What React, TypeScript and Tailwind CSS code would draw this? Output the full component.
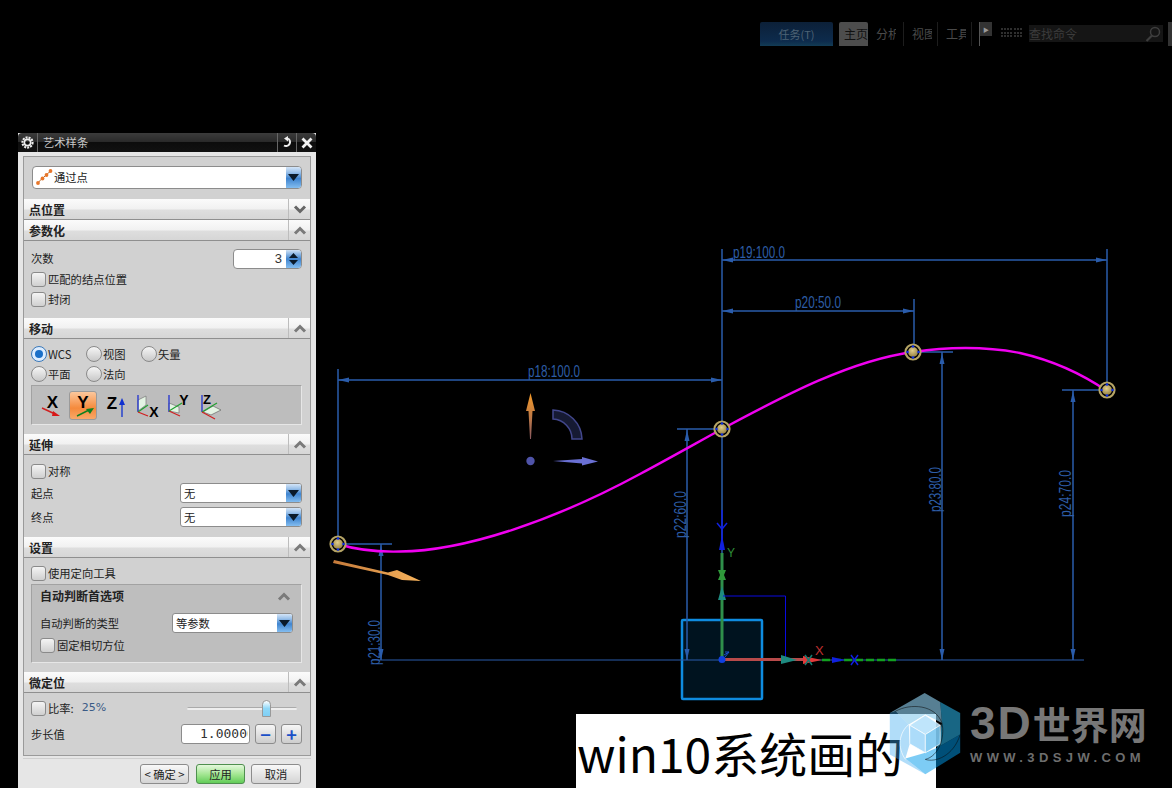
import React from "react";

const CURVE =
  "M338,544 C360,551 380,552 400,551.5 C465,551 555,520 640,474 C670,458 700,441 722,429 C780,398 850,360 914,352 C945,347 985,346 1020,353 C1055,361 1085,376 1107,391";

const DIM = "#2a5cab";

function ArrowH({ x, y, dir }: { x: number; y: number; dir: 1 | -1 }) {
  return <polygon points={`${x},${y} ${x - dir * 11},${y - 2.5} ${x - dir * 11},${y + 2.5}`} fill={DIM} />;
}
function ArrowV({ x, y, dir }: { x: number; y: number; dir: 1 | -1 }) {
  return <polygon points={`${x},${y} ${x - 2.5},${y - dir * 11} ${x + 2.5},${y - dir * 11}`} fill={DIM} />;
}
function DimText({ x, y, len, t, rot }: { x: number; y: number; len: number; t: string; rot?: boolean }) {
  return (
    <text x={x} y={y} fontFamily="'Liberation Sans',sans-serif" fontSize={16} fill="#2d5da6" textLength={len} lengthAdjust="spacingAndGlyphs" transform={rot ? `rotate(-90 ${x} ${y})` : undefined}>
      {t}
    </text>
  );
}
function Node({ x, y }: { x: number; y: number }) {
  return (
    <g>
      <circle cx={x} cy={y} r={7.5} fill="#000" stroke="#b5a465" strokeWidth={2.2} />
      <circle cx={x} cy={y} r={5} fill="url(#ball)" />
      <g fill="#1030e0">
        <circle cx={x} cy={y - 5.5} r={1.3} /><circle cx={x} cy={y + 5.5} r={1.3} /><circle cx={x - 5.5} cy={y} r={1.3} /><circle cx={x + 5.5} cy={y} r={1.3} />
      </g>
    </g>
  );
}

function Scene() {
  return (
    <svg className="absolute left-0 top-0" width={1172} height={788} viewBox="0 0 1172 788">
      <defs>
        <radialGradient id="ball" cx="45%" cy="35%" r="75%"><stop offset="0" stopColor="#e0cd8c" /><stop offset="1" stopColor="#8a7638" /></radialGradient>
        <linearGradient id="org" x1="0" x2="1" y1="0" y2="0"><stop offset="0" stopColor="#c57a3a" /><stop offset="1" stopColor="#f7b35c" /></linearGradient>
        <linearGradient id="orgv" x1="0" x2="0" y1="0" y2="1"><stop offset="0" stopColor="#f59a28" /><stop offset="1" stopColor="#8a5a60" /></linearGradient>
      </defs>
      <rect x={682} y={620} width={80} height={79} rx={1} fill="#00131f" stroke="#0f8ce0" strokeWidth={2.5} />
      <g stroke={DIM} strokeWidth={1.5} fill="none">
        <path d="M338,369V544M338,380H722" />
        <path d="M722,249V660M722,260H1107M1107,249V390M722,311H914M914,299V352" />
        <path d="M372,660H1084" strokeWidth={1} />
        <path d="M338,544H392M381,544V660" />
        <path d="M677,429H722M687,429V660" />
        <path d="M914,352H953M942,352V660" />
        <path d="M1062,390H1107M1073,390V660" />
      </g>
      <ArrowH x={338} y={380} dir={-1} /><ArrowH x={722} y={380} dir={1} />
      <ArrowH x={722} y={260} dir={-1} /><ArrowH x={1107} y={260} dir={1} />
      <ArrowH x={722} y={311} dir={-1} /><ArrowH x={914} y={311} dir={1} />
      <ArrowV x={381} y={545} dir={-1} /><ArrowV x={381} y={660} dir={1} />
      <ArrowV x={687} y={430} dir={-1} /><ArrowV x={687} y={660} dir={1} />
      <ArrowV x={942} y={353} dir={-1} /><ArrowV x={942} y={660} dir={1} />
      <ArrowV x={1073} y={391} dir={-1} /><ArrowV x={1073} y={660} dir={1} />
      <DimText x={528} y={377} len={52} t="p18:100.0" />
      <DimText x={733} y={258} len={52} t="p19:100.0" />
      <DimText x={795} y={308} len={46} t="p20:50.0" />
      <DimText x={380} y={665} len={45} t="p21:30.0" rot />
      <DimText x={686} y={538} len={47} t="p22:60.0" rot />
      <DimText x={941} y={512} len={45} t="p23:80.0" rot />
      <DimText x={1071} y={517} len={47} t="p24:70.0" rot />

      <path d={CURVE} fill="none" stroke="#f000f0" strokeWidth={2.4} />
      <Node x={338} y={544} /><Node x={722} y={429} /><Node x={913} y={352} /><Node x={1107} y={390} />

      {/* gizmo */}
      <polygon points="530.5,393 526,411 528.5,411 530,439 531,439 532.5,411 535,411" fill="url(#orgv)" />
      <path d="M553,410 A30,30 0 0 1 582,439 L572,439 A20,20 0 0 0 553,419 Z" fill="#161a33" stroke="#42478c" strokeWidth={1.5} />
      <circle cx={530.5} cy={461} r={4.2} fill="#4f53a8" />
      <polygon points="553,461 582,459 582,457 598,461.5 582,465.5 582,463.5" fill="#6a70d4" />
      <polygon points="334,560 388,572.5 397,570 421,581 402,580 388,575 333,563" fill="url(#org)" />

      {/* WCS */}
      <path d="M722,510V545" stroke="#1020e0" strokeWidth={1.5} />
      <path d="M717,523L722,529L727,523" stroke="#1020e0" strokeWidth={1.5} fill="none" />
      <polygon points="722,535 719,550 725,550" fill="#1020e0" />
      <path d="M722,553V660" stroke="#2f8f4a" strokeWidth={3} />
      <polygon points="718,570 726,570 724,575 726,580 718,580 720,575" fill="#2f9a3a" />
      <polygon points="722,586 718,600 726,600" fill="#1e8a80" />
      <path d="M723,596H785.5V660" stroke="#0a0ae0" strokeWidth={1} fill="none" />
      <text x={727} y={557} fontFamily="'Liberation Sans',sans-serif" fontSize={12} fill="#2f8f3a">Y</text>
      <path d="M722,659.5H805" stroke="#b84a4a" strokeWidth={3} />
      <polygon points="781,655 797,660 781,664" fill="#1e8a80" />
      <polygon points="803,656 822,660 803,664" fill="#e23a3a" />
      <path d="M805,655L812,665M812,655L805,665" stroke="#147a70" strokeWidth={1.5} />
      <text x={815} y={655} fontFamily="'Liberation Sans',sans-serif" fontSize={13} fill="#c03030">X</text>
      <path d="M822,660H898" stroke="#12a020" strokeWidth={2.5} strokeDasharray="8 3" />
      <polygon points="832,657 845,660 832,663" fill="#1020e0" />
      <path d="M851,655L858,665M858,655L851,665" stroke="#1020e0" strokeWidth={1.5} />
      <circle cx={722} cy={659.5} r={3.5} fill="#1040e0" />
      <path d="M724,655L729,652M725,652H729L725,657" stroke="#1a50d0" strokeWidth={1} fill="none" />
    </svg>
  );
}

function Logo() {
  return (
    <svg width={74} height={83} viewBox="28 25 212 250" className="shrink-0">
      <polygon points="28,85 133,25 180,52 185,115 135,90 85,120 45,80" fill="rgba(140,205,238,.62)" />
      <polygon points="180,52 240,85 240,150 170,190 185,115" fill="rgba(40,170,220,.6)" />
      <polygon points="240,150 240,205 135,270 75,222 135,205 170,190" fill="rgba(0,155,235,.51)" />
      <polygon points="28,85 45,80 85,120 88,178 75,222 135,270 28,210" fill="rgba(60,170,240,.4)" />
      <polygon points="88,122 135,92 180,122 135,150" fill="#b8e2fb" fillOpacity={0.9} stroke="#fff" strokeWidth={2} />
      <polygon points="88,122 135,150 135,205 88,178" fill="#a3d8f9" fillOpacity={0.9} stroke="#fff" strokeWidth={2} />
      <polygon points="135,150 180,122 180,178 135,205" fill="#7cc8f1" fillOpacity={0.9} stroke="#fff" strokeWidth={2} />
      <path d="M45,80 C90,55 165,60 185,115 C195,160 175,215 135,225" fill="none" stroke="#0a0a0a" strokeWidth={2} opacity={0.8} />
      <path d="M240,150 C220,215 165,235 135,225" fill="none" stroke="#0a0a0a" strokeWidth={2} opacity={0.8} />
      <path d="M85,120 C55,145 50,190 75,225" fill="none" stroke="#fff" strokeWidth={2} />
    </svg>
  );
}

function Chevron({ up = true, dark = false }: { up?: boolean; dark?: boolean }) {
  return (
    <svg width={14} height={9} viewBox="0 0 14 9">
      <path d={up ? "M2,7.5L7,2.5L12,7.5" : "M2,1.5L7,6.5L12,1.5"} fill="none" stroke={dark ? "#666" : "#7a7a7a"} strokeWidth={3} />
    </svg>
  );
}

function Header({ title, up = true }: { title: string; up?: boolean }) {
  return (
    <div className="flex h-[21px] items-stretch border-b border-[#8f8f8f] bg-[linear-gradient(#fbfbfb_0%,#f1f1f1_50%,#dedede_55%,#d6d6d6_100%)]">
      <div className="flex-1 pl-[5px] text-[12px] font-bold leading-[21px] text-[#222]">{title}</div>
      <div className="flex w-[22px] items-center justify-center border-l border-[#bdbdbd]">
        <Chevron up={up} dark={!up} />
      </div>
    </div>
  );
}

function Check({ label, className = "" }: { label: string; className?: string }) {
  return (
    <div className={`flex items-center text-[11.3px] text-[#222] ${className}`}>
      <div className="mr-[2px] h-[15px] w-[15px] rounded-[3px] border border-[#8a8a8a] bg-[linear-gradient(#f4f4f4,#cfcfcf)]" />
      <span>{label}</span>
    </div>
  );
}

function Radio({ label, on = false }: { label: string; on?: boolean }) {
  return (
    <div className="flex w-[55px] items-center text-[11.3px] text-[#222]">
      <div className={`mr-[1px] flex h-[16px] w-[16px] items-center justify-center rounded-full border ${on ? "border-[#3a78b8] bg-[#dcecff]" : "border-[#8a8a8a] bg-[linear-gradient(#f6f6f6,#c8c8c8)]"}`}>
        {on && <div className="h-[8px] w-[8px] rounded-full bg-[#1a6fc8]" />}
      </div>
      <span>{label}</span>
    </div>
  );
}

function Combo({ value, w, className = "" }: { value: string; w: string; className?: string }) {
  return (
    <div className={`flex h-[20px] items-stretch overflow-hidden rounded-[3px] border border-[#8c8c8c] bg-white ${w} ${className}`}>
      <div className="flex-1 pl-[3px] text-[11.3px] leading-[19px] text-[#222]">{value}</div>
      <DropBtn />
    </div>
  );
}
function DropBtn() {
  return (
    <div className="flex w-[15px] items-center justify-center bg-[linear-gradient(#d3e4f7_0%,#9cc2ea_25%,#3f84cf_55%,#83bdf0_100%)]">
      <svg width={11} height={7} viewBox="0 0 11 7"><polygon points="0,0 11,0 5.5,7" fill="#0a1a2a" /></svg>
    </div>
  );
}

function IconBtn({ children, on = false }: { children: React.ReactNode; on?: boolean }) {
  return (
    <div className={`h-[29px] w-[28px] shrink-0 rounded-[3px] ${on ? "border border-[#9a9a9a] bg-[linear-gradient(#fcc79c,#f58a3c_60%,#f9a868)]" : ""}`}>
      <svg width={on ? 26 : 28} height={on ? 27 : 29} viewBox={on ? "1 1 26 27" : "0 0 28 29"} fontFamily="'Liberation Sans',sans-serif" fontWeight={700} fill="#000">
        {children}
      </svg>
    </div>
  );
}

function Btn({ label, w, cls }: { label: string; w: string; cls: string }) {
  return <div className={`flex h-[20px] items-center justify-center rounded-[3px] border text-[11.3px] text-[#222] ${w} ${cls}`}>{label}</div>;
}

function SmallBtn({ label, color }: { label: string; color: string }) {
  return <div className={`flex h-[20px] w-[21px] items-center justify-center rounded-[3px] border border-[#8c8c8c] bg-[linear-gradient(#f6f6f6,#cdcdcd)] text-[18px] font-bold leading-none ${color}`}>{label}</div>;
}

function Dialog() {
  return (
    <div className="absolute left-[18px] top-[133px] h-[655px] w-[298px] bg-[#e6e6e6] font-['Noto_Sans_CJK_SC','Liberation_Sans',sans-serif]">
      {/* title bar */}
      <div className="flex h-[19px] items-stretch rounded-t-[4px] bg-[linear-gradient(#3b3b3b_0%,#2a2a2a_45%,#0c0c0c_50%,#111_100%)]">
        <div className="flex w-[20px] items-center justify-center border-r border-[#666]">
          <svg width={13} height={13} viewBox="0 0 14 14">
            <circle cx={7} cy={7} r={5.5} fill="none" stroke="#eee" strokeWidth={2.2} strokeDasharray="2.2 1.1" />
            <circle cx={7} cy={7} r={3.4} fill="none" stroke="#eee" strokeWidth={1.8} />
          </svg>
        </div>
        <div className="flex-1 pl-[5px] text-[11.3px] leading-[19px] text-[#c8c8c8]">艺术样条</div>
        <div className="flex w-[19px] items-center justify-center border-l border-[#666]">
          <svg width={13} height={13} viewBox="0 0 13 13">
            <path d="M7,2.5A4,4 0 1 1 3,9.5" fill="none" stroke="#eee" strokeWidth={2} />
            <polygon points="7,0 7,5.5 3,2.5" fill="#eee" />
          </svg>
        </div>
        <div className="flex w-[20px] items-center justify-center border-l border-[#666]">
          <svg width={12} height={12} viewBox="0 0 12 12"><path d="M1.5,1.5L10.5,10.5M10.5,1.5L1.5,10.5" stroke="#f2f2f2" strokeWidth={2.8} /></svg>
        </div>
      </div>

      <div className="mx-[5px] mt-[4px] border border-[#9a9a9a] bg-[#d1d1d1]">
        <div className="flex h-[42px] items-center pb-[2px] pl-[8px]">
          <div className="flex h-[23px] w-[270px] items-stretch overflow-hidden rounded-[4px] border border-[#8c8c8c] bg-white">
            <div className="flex flex-1 items-center pl-[2px] text-[11.3px] text-[#222]">
              <svg width={18} height={18} viewBox="0 0 18 18" className="mr-[1px]">
                <path d="M2,16C5,12 7,11 9,9C11,7 13,5 16,3" stroke="#b06a30" strokeWidth={1} fill="none" />
                <circle cx={3} cy={15} r={1.9} fill="#e8762a" /><circle cx={7.5} cy={10.5} r={1.9} fill="#e8762a" /><circle cx={11.5} cy={7} r={1.9} fill="#e8762a" /><circle cx={15.5} cy={3} r={1.9} fill="#e8762a" />
              </svg>
              通过点
            </div>
            <DropBtn />
          </div>
        </div>

        <Header title="点位置" up={false} />
        <Header title="参数化" />
        <div className="h-[77px] pt-[7px] pl-[7px] pr-[8px]">
          <div className="flex h-[21px] items-center justify-between text-[11.3px] text-[#222]">
            <span>次数</span>
            <div className="flex h-[20px] w-[69px] items-stretch overflow-hidden rounded-[4px] border border-[#8c8c8c] bg-white">
              <div className="flex-1 pr-[4px] text-right font-['Liberation_Sans',sans-serif] text-[13px] leading-[18px] text-[#333]">3</div>
              <div className="flex w-[15px] flex-col items-center justify-center gap-[2px] bg-[linear-gradient(#cfe2f6,#3f84cf_50%,#83bdf0)]">
                <svg width={9} height={5} viewBox="0 0 9 5"><polygon points="4.5,0 9,5 0,5" fill="#0a1a2a" /></svg>
                <svg width={9} height={5} viewBox="0 0 9 5"><polygon points="0,0 9,0 4.5,5" fill="#0a1a2a" /></svg>
              </div>
            </div>
          </div>
          <Check label="匹配的结点位置" className="h-[20px]" />
          <Check label="封闭" className="h-[20px]" />
        </div>

        <Header title="移动" />
        <div className="h-[95px] pt-[5px] pl-[7px] pr-[8px]">
          <div className="flex h-[20px] items-center"><Radio label="WCS" on /><Radio label="视图" /><Radio label="矢量" /></div>
          <div className="flex h-[20px] items-center"><Radio label="平面" /><Radio label="法向" /></div>
          <div className="mt-[1px] flex h-[40px] w-[271px] items-center gap-[3px] border border-[#a2a2a2] border-b-[#e6e6e6] border-r-[#e6e6e6] bg-[#bdbdbd] pl-[6px]">
            <IconBtn>
              <text x={14.5} y={17} fontSize={17} textAnchor="middle">X</text>
              <path d="M4,17L17,23" stroke="#d02020" strokeWidth={1.5} /><polygon points="15,20 22,25 14,25" fill="#d81818" />
            </IconBtn>
            <IconBtn on>
              <text x={14} y={17} fontSize={17} textAnchor="middle">Y</text>
              <path d="M8,25L20,19" stroke="#108020" strokeWidth={1.5} /><polygon points="25,17 21,23 17,18" fill="#108020" />
            </IconBtn>
            <IconBtn>
              <text x={12} y={18} fontSize={17} textAnchor="middle">Z</text>
              <path d="M22,11V26" stroke="#1030d0" strokeWidth={1.3} /><polygon points="22,7 19,14 25,14" fill="#1030d0" />
            </IconBtn>
            <IconBtn>
              <polygon points="7,9 15,5 15,14 7,20" fill="#e3f3e3" stroke="#777" strokeWidth={0.7} />
              <path d="M7,4V21" stroke="#2030d0" strokeWidth={1.3} /><path d="M7,21L17,14" stroke="#20a030" strokeWidth={1.2} /><path d="M7,21L17,25" stroke="#d02020" strokeWidth={1.2} />
              <text x={23} y={26} fontSize={14} textAnchor="middle">X</text>
            </IconBtn>
            <IconBtn>
              <polygon points="7,12 17,16 17,22 7,20" fill="#e3f3e3" stroke="#777" strokeWidth={0.7} />
              <path d="M7,4V21" stroke="#2030d0" strokeWidth={1.3} /><path d="M7,20L18,25" stroke="#d02020" strokeWidth={1.2} /><path d="M7,20L20,12" stroke="#20a030" strokeWidth={1.2} />
              <text x={22} y={14} fontSize={14} textAnchor="middle">Y</text>
            </IconBtn>
            <IconBtn>
              <polygon points="10,21 20,15 28,19 18,24" fill="#e3f3e3" stroke="#666" strokeWidth={0.7} />
              <path d="M9,4V21" stroke="#2030d0" strokeWidth={1.3} /><path d="M9,21L24,12" stroke="#20a030" strokeWidth={1.2} /><path d="M9,21L22,28" stroke="#d02020" strokeWidth={1.2} />
              <text x={14} y={13} fontSize={13} textAnchor="middle">Z</text>
            </IconBtn>
          </div>
        </div>

        <Header title="延伸" />
        <div className="h-[82px] pt-[6px] pl-[7px] pr-[8px]">
          <Check label="对称" className="h-[20px]" />
          <div className="mt-[2px] flex h-[20px] items-center justify-between text-[11.3px] text-[#222]"><span>起点</span><Combo value="无" w="w-[122px]" /></div>
          <div className="mt-[4px] flex h-[20px] items-center justify-between text-[11.3px] text-[#222]"><span>终点</span><Combo value="无" w="w-[122px]" /></div>
        </div>

        <Header title="设置" />
        <div className="h-[114px] pt-[5px] pl-[7px] pr-[8px]">
          <Check label="使用定向工具" className="h-[20px]" />
          <div className="mt-[1px] h-[79px] w-[271px] border border-[#a2a2a2] border-b-[#e6e6e6] border-r-[#e6e6e6] bg-[#bebebe] px-[8px]">
            <div className="flex h-[22px] items-center justify-between pr-[2px] text-[12px] font-bold text-[#222]"><span>自动判断首选项</span><Chevron /></div>
            <div className="mt-[6px] flex h-[20px] items-center justify-between text-[11.3px] text-[#222]"><span>自动判断的类型</span><Combo value="等参数" w="w-[121px]" /></div>
            <Check label="固定相切方位" className="mt-[2px] h-[20px]" />
          </div>
        </div>

        <Header title="微定位" />
        <div className="h-[62px] pt-[5px] pl-[7px] pr-[8px]">
          <div className="flex h-[20px] items-center justify-between">
            <div className="flex items-center">
              <Check label="比率:" />
              <span className="ml-[8px] font-['DejaVu_Sans',sans-serif] text-[11px] text-[#3a5a86]">25%</span>
            </div>
            <div className="relative mr-[5px] h-[17px] w-[110px]">
              <div className="absolute left-0 right-0 top-[7px] h-[3px] rounded-full border-t border-[#aaa] bg-[#eee]" />
              <div className="absolute left-[75px] top-0 h-[17px] w-[9px] rounded-t-full rounded-b-[2px] border border-[#999] bg-[linear-gradient(#fff,#8fd8f8_50%,#7fcff5)]" />
            </div>
          </div>
          <div className="mt-[6px] flex h-[20px] items-center justify-between text-[11.3px] text-[#222]">
            <span>步长值</span>
            <div className="flex items-center gap-[5px]">
              <div className="h-[20px] w-[69px] rounded-[3px] border border-[#8c8c8c] bg-white pl-[18px]">
                <div className="w-[48px] overflow-hidden whitespace-nowrap font-['DejaVu_Sans_Mono',monospace] text-[13px] leading-[18px] text-[#333]">1.00000</div>
              </div>
              <SmallBtn label="−" color="text-[#1a50c8]" />
              <SmallBtn label="+" color="text-[#1a50c8]" />
            </div>
          </div>
        </div>
      </div>

      <div className="mx-[5px] mt-[2px] h-[1px] bg-[#cfcfcf]" />
      <div className="mt-[5px] flex pl-[122px]">
        <Btn label="< 确定 >" w="w-[49px]" cls="border-[#8c8c8c] bg-[linear-gradient(#f8f8f8,#d4d4d4)] whitespace-nowrap" />
        <Btn label="应用" w="w-[49px] ml-[7px]" cls="border-[#4f8f4f] bg-[linear-gradient(#e4f8dc,#9fe58e_55%,#62cc58)]" />
        <Btn label="取消" w="w-[50px] ml-[6px]" cls="border-[#8c8c8c] bg-[linear-gradient(#f8f8f8,#d4d4d4)]" />
      </div>
    </div>
  );
}

function Tab({ label, w }: { label: string; w: string }) {
  return (
    <div className={`h-[24px] border-r border-[#1d1d1d] pl-[8px] ${w}`}>
      <div className="w-[20px] overflow-hidden whitespace-nowrap text-[12px] leading-[24px] text-[#4a4a4a]">{label}</div>
    </div>
  );
}

function Toolbar() {
  return (
    <div className="relative ml-[760px] flex h-[46px] items-start pt-[22px] font-['Noto_Sans_CJK_SC','Liberation_Sans',sans-serif]">
      <div className="flex h-[24px] w-[73px] items-center justify-center rounded-t-[2px] bg-[linear-gradient(#0c2038,#0d2b4c_80%,#123c55)] text-[11px] text-[#4e6375]">任务(T)</div>
      <div className="ml-[6px] h-[24px] w-[29px] overflow-hidden whitespace-nowrap rounded-t-[2px] bg-[#4d4d4d] pl-[5px] text-[12px] leading-[24px] text-[#111]">主页</div>
      <Tab label="分析" w="w-[36px]" />
      <Tab label="视图" w="w-[34px]" />
      <Tab label="工具" w="w-[34px]" />
      <div className="ml-[7px] h-[24px] w-[13px] border-l border-[#555]">
        <div className="flex h-[14px] items-center justify-center bg-[#333] text-[6px] text-[#999]">▶</div>
      </div>
      <div className="ml-[9px] mt-[6px] grid h-[10px] w-[21px] grid-cols-7 gap-[1px]">
        {Array.from({ length: 21 }).map((_, i) => <div key={i} className="h-[2px] w-[2px] bg-[#2e2e2e]" />)}
      </div>
      <div className="ml-[7px] mt-[3px] flex h-[17px] w-[134px] items-center justify-between bg-[#151515] pr-[2px] text-[12px] text-[#3c3c3c]">
        <span>查找命令</span>
        <svg width={16} height={16} viewBox="0 0 16 16" fill="none" stroke="#3e3e3e" strokeWidth={1.5}><circle cx={10} cy={6} r={4.5} /><path d="M7,9.5L1.5,15" strokeWidth={2.2} /></svg>
      </div>
      <div className="ml-[5px] h-[24px] w-[4px] bg-[#333]" />
    </div>
  );
}

export default function App() {
  return (
    <div className="relative h-[788px] w-full overflow-hidden bg-black">
      <Toolbar />
      <Scene />
      <Dialog />
      <div className="absolute left-[576px] top-[714px] h-[74px] w-[360px] overflow-hidden bg-white pl-[1px] font-['Noto_Sans_CJK_SC','Liberation_Sans',sans-serif] text-[48px] leading-[76px] text-black">win10系统画的</div>
      <div className="absolute left-[888px] top-[693px] flex gap-[8px]">
        <Logo />
        <div className="flex flex-col pt-[3px]">
          <div className="flex h-[54px] items-baseline font-['Noto_Sans_CJK_SC','Liberation_Sans',sans-serif] font-bold leading-[54px] text-[#777]">
            <span className="font-['Liberation_Sans',sans-serif] text-[46px] tracking-[2px]">3D</span>
            <span className="text-[38px]">世界网</span>
          </div>
          <div className="whitespace-nowrap font-['Liberation_Sans',sans-serif] text-[13px] font-bold leading-[16px] tracking-[4.4px] text-[#6e6e6e]">WWW.3DSJW.COM</div>
        </div>
      </div>
    </div>
  );
}
